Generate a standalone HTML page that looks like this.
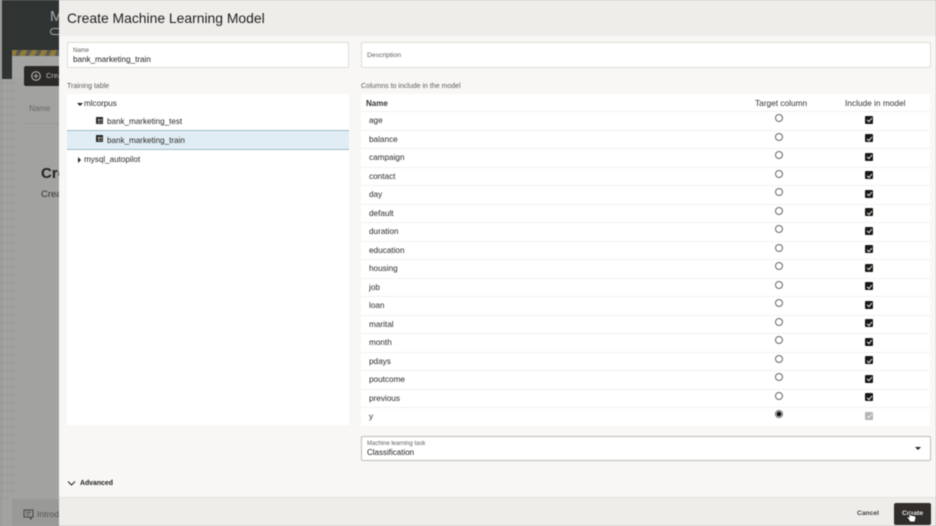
<!DOCTYPE html>
<html><head><meta charset="utf-8">
<style>
*{box-sizing:border-box}
html,body{margin:0;padding:0;background:#a3a3a2}
body{width:936px;height:526px;position:relative;overflow:hidden;font-family:"Liberation Sans",sans-serif;color:#222}
.a{position:absolute;white-space:nowrap}
#wrap{position:absolute;left:0;top:0;width:936px;height:526px;filter:blur(.45px);overflow:hidden}
.r{position:absolute;left:361px;width:569px;height:18.5px;border-top:1px solid #f3f2f0;background:#fff;font-size:8.2px;line-height:17.5px}
.r span{position:absolute;left:8px;top:0;color:#2b2a28}
.r i{position:absolute;left:413.5px;top:2px;width:8px;height:8px;border:1px solid #666;border-radius:50%;background:#fff}
.r b{position:absolute;left:504px;top:3.5px;width:8px;height:8px;background:#1a1816;border-radius:1px}
.r b:after{content:"";position:absolute;left:2.8px;top:1.6px;width:2.4px;height:4px;border:solid #eee;border-width:0 .9px .9px 0;transform:rotate(40deg)}
.lbl{font-size:7px;color:#605d59}
.tree{font-size:8.1px;color:#2b2a28}
.ic{position:absolute;width:7px;height:7px;background:
linear-gradient(#2a2826,#2a2826) 0 0/7px 2px no-repeat,
linear-gradient(#2a2826,#2a2826) 0 0/2px 7px no-repeat,
linear-gradient(#2a2826,#2a2826) 0 4px/7px 1px no-repeat,
linear-gradient(#2a2826,#2a2826) 0 6px/7px 1px no-repeat,
linear-gradient(#2a2826,#2a2826) 4px 0/1px 7px no-repeat,
linear-gradient(#2a2826,#2a2826) 6px 0/1px 7px no-repeat,#bbb}
</style></head><body>
<div id="wrap">
<!-- background page -->
<div class="a" style="left:0;top:0;width:60px;height:79px;background:#2f3332"></div>
<div class="a" style="left:0;top:79px;width:60px;height:447px;background:#a2a2a1"></div>
<div class="a" style="left:0;top:79px;width:13px;height:420px;background:radial-gradient(circle,#949493 0 1px,transparent 1.4px) 0 0/5px 8px"></div>
<div class="a" style="left:0;top:0;width:2px;height:526px;background:#9a9a99"></div>
<div class="a" style="left:12px;top:50px;width:48px;height:6px;background:repeating-linear-gradient(115deg,#8f7d3a 0 5px,#5b5b55 5px 9px)"></div>
<div class="a" style="left:12px;top:56px;width:48px;height:23px;background:#a5a5a4"></div>
<div class="a" style="left:24px;top:66px;width:36px;height:20px;background:#2b2926;border-radius:2px 0 0 2px"></div>
<svg class="a" style="left:30px;top:70px" width="12" height="12" viewBox="0 0 12 12"><circle cx="6" cy="6" r="4.3" fill="none" stroke="#ccc" stroke-width=".9"/><path d="M6 3.6V8.4M3.6 6H8.4" stroke="#ccc" stroke-width=".8"/></svg>
<div class="a" style="left:46px;top:71px;font-size:7.5px;color:#bbb">Crea</div>
<div class="a" style="left:29px;top:104px;font-size:8px;color:#666">Name</div>
<div class="a" style="left:24px;top:123px;width:36px;height:1px;background:#979796"></div>
<div class="a" style="left:41px;top:165px;font-size:15px;font-weight:bold;color:#222">Cre</div>
<div class="a" style="left:41px;top:189px;font-size:9.5px;color:#333">Crea</div>
<div class="a" style="left:50px;top:8px;font-size:15px;color:#aaa">M</div>
<div class="a" style="left:50px;top:28px;width:12px;height:7px;border:1px solid #aaa;border-right:0;border-radius:4px 0 0 4px"></div>
<div class="a" style="left:12px;top:499px;width:48px;height:27px;background:#999998"></div>
<svg class="a" style="left:23px;top:509px" width="11" height="11" viewBox="0 0 11 11"><path d="M1 1H10V8H8V10L6 8H1Z" fill="none" stroke="#444" stroke-width="1"/><path d="M3 3.2H8M3 5.5H7" stroke="#444" stroke-width=".8"/></svg>
<div class="a" style="left:37px;top:509px;font-size:8.6px;color:#555">Introd</div>

<!-- dialog -->
<div class="a" style="left:59px;top:0;width:877px;height:526px;background:#f8f7f5"></div>
<div class="a" style="left:59px;top:0;width:877px;height:36px;background:#eeedea"></div>
<div class="a" style="left:67px;top:9px;font-size:13.9px;line-height:18px;color:#1e1d1b">Create Machine Learning Model</div>

<div class="a" style="left:67px;top:42px;width:282px;height:26px;background:#fff;border:1px solid #dddcd8;border-radius:2px"></div>
<div class="a lbl" style="left:73px;top:47px;font-size:6px;line-height:8px">Name</div>
<div class="a" style="left:73px;top:54px;font-size:8.1px;line-height:11px;color:#222">bank_marketing_train</div>

<div class="a" style="left:361px;top:42px;width:570px;height:26px;background:#fff;border:1px solid #dddcd8;border-radius:2px"></div>
<div class="a lbl" style="left:367px;top:51px;font-size:6.8px;line-height:9px">Description</div>

<div class="a lbl" style="left:67px;top:81.5px;line-height:9px">Training table</div>
<div class="a" style="left:67px;top:94px;width:282px;height:331px;background:#fff"></div>
<div class="a" style="left:67px;top:130px;width:282px;height:20px;background:#e0edf4;border-top:1px solid #9fbccb;border-bottom:1px solid #9fbccb"></div>
<div class="a" style="left:76.5px;top:102.5px;width:0;height:0;border:3px solid transparent;border-top:3px solid #222"></div>
<div class="a tree" style="left:84px;top:98px;line-height:11px">mlcorpus</div>
<div class="ic" style="left:96px;top:117px"></div>
<div class="a tree" style="left:107px;top:116px;line-height:11px">bank_marketing_test</div>
<div class="ic" style="left:96px;top:135px"></div>
<div class="a tree" style="left:107px;top:135px;line-height:11px">bank_marketing_train</div>
<div class="a" style="left:78px;top:157px;width:0;height:0;border:3px solid transparent;border-left:3px solid #222"></div>
<div class="a tree" style="left:84px;top:154px;line-height:11px">mysql_autopilot</div>

<div class="a lbl" style="left:361px;top:81.5px;line-height:9px">Columns to include in the model</div>
<div class="a" style="left:361px;top:94px;width:569px;height:18px;background:#fff"></div>
<div class="a" style="left:366px;top:98px;font-size:8px;line-height:11px;font-weight:bold;color:#333">Name</div>
<div class="a" style="left:755px;top:98px;font-size:8.3px;line-height:11px;color:#333">Target column</div>
<div class="a" style="left:845px;top:98px;font-size:8.3px;line-height:11px;color:#333">Include in model</div>

<div class="r" style="top:111px"><span>age</span><i></i><b></b></div>
<div class="r" style="top:129.5px"><span>balance</span><i></i><b></b></div>
<div class="r" style="top:148px"><span>campaign</span><i></i><b></b></div>
<div class="r" style="top:166.5px"><span>contact</span><i></i><b></b></div>
<div class="r" style="top:185px"><span>day</span><i></i><b></b></div>
<div class="r" style="top:203.5px"><span>default</span><i></i><b></b></div>
<div class="r" style="top:222px"><span>duration</span><i></i><b></b></div>
<div class="r" style="top:240.5px"><span>education</span><i></i><b></b></div>
<div class="r" style="top:259px"><span>housing</span><i></i><b></b></div>
<div class="r" style="top:277.5px"><span>job</span><i></i><b></b></div>
<div class="r" style="top:296px"><span>loan</span><i></i><b></b></div>
<div class="r" style="top:314.5px"><span>marital</span><i></i><b></b></div>
<div class="r" style="top:333px"><span>month</span><i></i><b></b></div>
<div class="r" style="top:351.5px"><span>pdays</span><i></i><b></b></div>
<div class="r" style="top:370px"><span>poutcome</span><i></i><b></b></div>
<div class="r" style="top:388.5px"><span>previous</span><i></i><b></b></div>
<div class="r" style="top:407px"><span>y</span><i style="background:radial-gradient(circle,#111 0 2.2px,#fff 2.6px)"></i><b style="background:#b5b4b2"></b></div>

<div class="a" style="left:361px;top:436px;width:570px;height:25px;background:#fff;border:1px solid #bdbcb8;border-radius:2px"></div>
<div class="a lbl" style="left:367px;top:440px;font-size:6px;line-height:8px">Machine learning task</div>
<div class="a" style="left:367px;top:447px;font-size:8px;line-height:11px;color:#222">Classification</div>
<div class="a" style="left:915px;top:447px;width:0;height:0;border:3px solid transparent;border-top:3.5px solid #222"></div>

<svg class="a" style="left:67px;top:479.5px" width="9" height="7" viewBox="0 0 9 7"><path d="M1 1.5L4.5 5L8 1.5" fill="none" stroke="#222" stroke-width="1"/></svg>
<div class="a" style="left:80px;top:479px;font-size:6.9px;line-height:10px;font-weight:bold;color:#222">Advanced</div>

<div class="a" style="left:59px;top:497px;width:877px;height:29px;background:#eeedea;border-top:1px solid #e4e3e0"></div>
<div class="a" style="left:857px;top:509px;font-size:6.7px;line-height:10px;font-weight:bold;color:#444">Cancel</div>
<div class="a" style="left:894px;top:503px;width:37px;height:22px;background:#312d2a;border-radius:2px"></div>
<div class="a" style="left:902px;top:509px;font-size:6.8px;line-height:10px;font-weight:bold;color:#e8e6e3">Create</div>
<svg class="a" style="left:905px;top:509px" width="13" height="14" viewBox="0 0 13 14"><path d="M4 1.5C4 .6 5.5 .6 5.5 1.5V6L10 7C11 7.3 11 8.5 10.8 9.5L10 13H5L2 8.5C1.6 7.6 2.6 6.8 3.4 7.5L4 8.2Z" fill="#fff" stroke="#111" stroke-width=".8"/></svg>
</div>
</body></html>
